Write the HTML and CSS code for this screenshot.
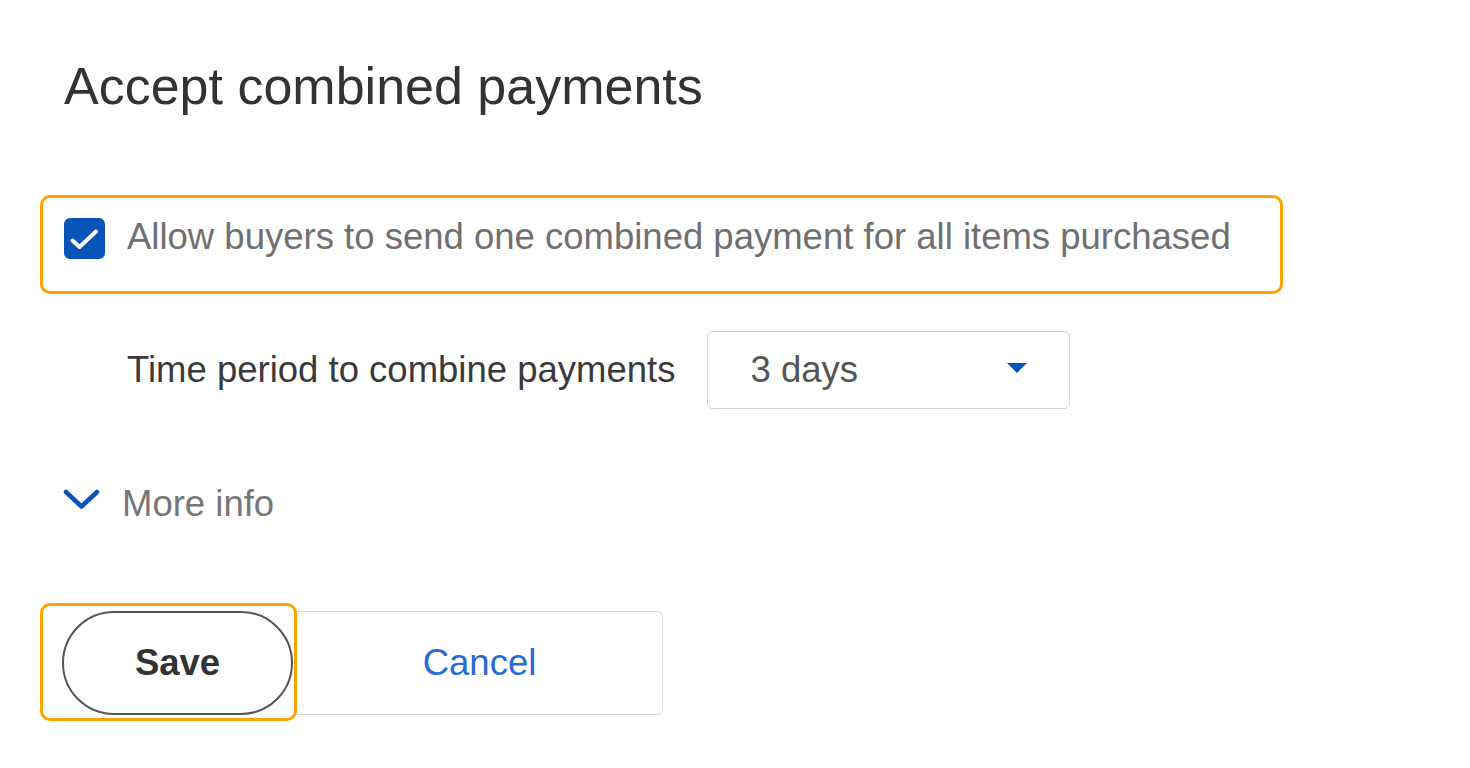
FILE: index.html
```html
<!DOCTYPE html>
<html lang="en">
<head>
<meta charset="utf-8">
<title>Accept combined payments</title>
<link rel="stylesheet" href="styles.css">
</head>
<body>
<main class="page">
  <h1 class="title">Accept combined payments</h1>

  <div class="highlight check-row">
    <span class="checkbox" role="checkbox" aria-checked="true">
      <svg width="41" height="41" viewBox="0 0 41 41"><polyline points="8.5,22.5 15.5,29 32,13.5" fill="none" stroke="#fff" stroke-width="4" stroke-linecap="round" stroke-linejoin="round"/></svg>
    </span>
    <span class="check-label">Allow buyers to send one combined payment for all items purchased</span>
  </div>

  <div class="period-row">
    <span class="period-label">Time period to combine payments</span>
    <div class="select">
      <span class="select-value">3 days</span>
      <svg class="select-arrow" width="20" height="10" viewBox="0 0 20 10"><polygon points="0,0 20,0 10,10" fill="#0654ba"/></svg>
    </div>
  </div>

  <div class="more-row">
    <svg class="chevron" width="37" height="21" viewBox="0 0 37 21"><polyline points="3,3 18.5,17.5 34,3" fill="none" stroke="#0654ba" stroke-width="4.5" stroke-linecap="round" stroke-linejoin="round"/></svg>
    <span class="more-text">More info</span>
  </div>

  <div class="actions">
    <div class="highlight save-wrap">
      <button class="btn-save">Save</button>
    </div>
    <button class="btn-cancel">Cancel</button>
  </div>
</main>
</body>
</html>
```

FILE: styles.css
```css
* { box-sizing: border-box; }

body {
  margin: 0;
  background: #fff;
  font-family: "Liberation Sans", Arial, sans-serif;
}

.page {
  padding: 0 0 0 40px;
}

.title {
  margin: 56px 0 0 24px;
  font-size: 52px;
  line-height: 60px;
  font-weight: normal;
  color: #333;
}

.highlight {
  border: 3px solid #ffa200;
  border-radius: 10px;
}

.check-row {
  margin-top: 79px;
  width: 1243px;
  height: 99px;
  display: flex;
  align-items: flex-start;
  gap: 22px;
  padding: 17px 0 0 21px;
}

.checkbox {
  margin-top: 3px;
  width: 41px;
  height: 41px;
  border-radius: 6px;
  background: #0654ba;
  display: flex;
  flex-shrink: 0;
}

.check-label {
  font-size: 36.5px;
  line-height: 44px;
  color: #707070;
}

.period-row {
  margin-top: 37px;
  padding-left: 87px;
  display: flex;
  align-items: center;
  gap: 32px;
}

.period-label {
  font-size: 36.5px;
  line-height: 44px;
  color: #3a3a3a;
}

.select {
  width: 363px;
  height: 78px;
  border: 1px solid #cfcfcf;
  border-radius: 6px;
  display: flex;
  align-items: center;
  justify-content: space-between;
  padding: 0 42px 0 42px;
}

.select-value {
  font-size: 36.5px;
  line-height: 44px;
  color: #555;
}

.select-arrow {
  margin-top: -4px;
}

.more-row {
  margin-top: 73px;
  padding-left: 23px;
  display: flex;
  align-items: flex-start;
  gap: 22px;
}

.chevron {
  margin-top: 7px;
}

.more-text {
  font-size: 36.5px;
  line-height: 44px;
  color: #767676;
}

.actions {
  margin-top: 77px;
  display: flex;
  align-items: flex-start;
}

.save-wrap {
  padding: 5px 1px 3px 19px;
}

.btn-save {
  display: block;
  width: 231px;
  height: 104px;
  border: 2px solid #555;
  border-radius: 52px;
  background: #fff;
  font-family: "Liberation Sans", Arial, sans-serif;
  font-size: 36.5px;
  font-weight: bold;
  color: #333;
  padding: 0;
}

.btn-cancel {
  margin-top: 8px;
  width: 366px;
  height: 104px;
  border: 1px solid #dadada;
  border-left: none;
  border-radius: 0 6px 6px 0;
  background: #fff;
  font-family: "Liberation Sans", Arial, sans-serif;
  font-size: 36.5px;
  color: #2a6ad2;
  padding: 0;
}
```
